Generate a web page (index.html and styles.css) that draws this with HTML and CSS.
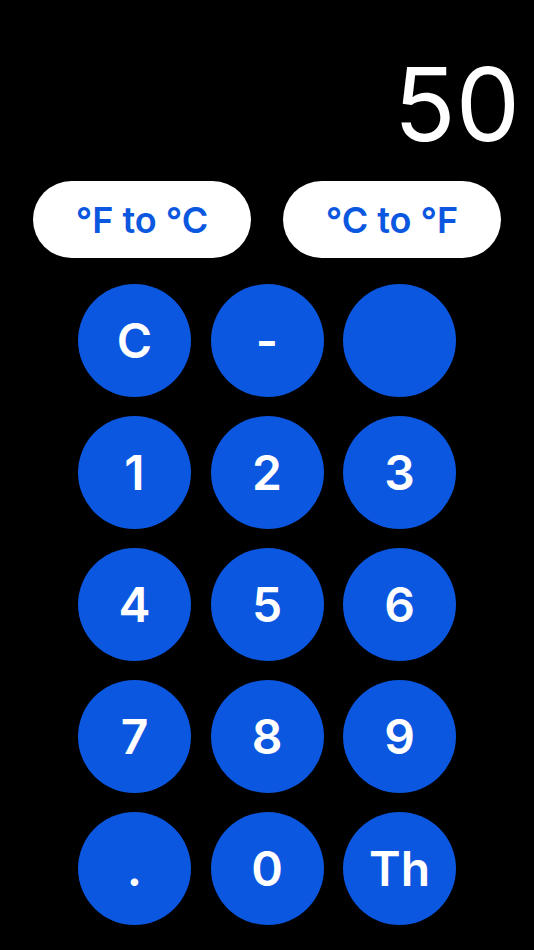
FILE: index.html
```html
<!DOCTYPE html>
<html>
<head>
<meta charset="utf-8">
<link rel="stylesheet" href="styles.css">
</head>
<body>
<div class="app">
  <div class="display">50</div>
  <div class="modes">
    <button class="pill">°F to °C</button>
    <button class="pill">°C to °F</button>
  </div>
  <div class="pad">
    <button class="key">C</button>
    <button class="key">-</button>
    <button class="key"></button>
    <button class="key">1</button>
    <button class="key">2</button>
    <button class="key">3</button>
    <button class="key">4</button>
    <button class="key">5</button>
    <button class="key">6</button>
    <button class="key">7</button>
    <button class="key">8</button>
    <button class="key">9</button>
    <button class="key">.</button>
    <button class="key">0</button>
    <button class="key">Th</button>
  </div>
</div>
</body>
</html>
```
FILE: styles.css
```css
html, body {
  margin: 0;
  padding: 0;
  background: #000;
}
body {
  width: 534px;
  height: 950px;
  overflow: hidden;
  font-family: Inter, "Liberation Sans", sans-serif;
}
.app {
  display: flex;
  flex-direction: column;
}
.display {
  color: #fff;
  font-size: 102px;
  font-weight: 400;
  line-height: 102px;
  height: 102px;
  text-align: right;
  padding: 53px 14px 0 0;
}
.modes {
  display: flex;
  justify-content: space-between;
  padding: 0 33px;
  margin-top: 26px;
}
.pill {
  width: 218px;
  height: 77px;
  border: none;
  border-radius: 39px;
  background: #fff;
  color: #0b57e0;
  font-family: inherit;
  font-size: 36px;
  font-weight: 600;
  padding: 0;
}
.pad {
  display: grid;
  grid-template-columns: repeat(3, 113px);
  grid-auto-rows: 113px;
  column-gap: 19.5px;
  row-gap: 19px;
  justify-content: center;
  margin-top: 26px;
}
.key {
  width: 113px;
  height: 113px;
  border: none;
  border-radius: 50%;
  background: #0b57e0;
  color: #fff;
  font-family: inherit;
  font-size: 48px;
  font-weight: 600;
  padding: 0;
}
```
